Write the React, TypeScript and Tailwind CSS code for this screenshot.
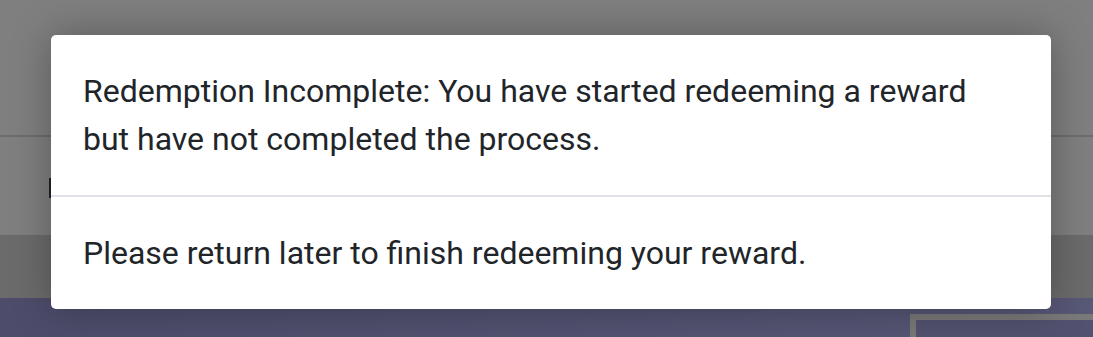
import React from "react";

export default function App() {
  return (
    <div className="relative w-[1093px] h-[337px] overflow-hidden" style={{ fontFamily: "Roboto, 'Liberation Sans', sans-serif" }}>
      {/* underlying page */}
      <div className="flex flex-col h-full">
        <div className="h-[137px] bg-white border-b-2 border-[#d8d8d8]" />
        <div className="h-[98px] bg-white flex items-start pt-[41px] pl-[49px]">
          <div className="w-[3px] h-[20px] bg-[#444]" />
        </div>
        <div className="h-[63px] bg-[#d6d6d6]" />
        <div className="flex-1 bg-gradient-to-r from-[#9a9ad6] to-[#b0b0ee] pt-[16px] pl-[910px]">
          <div className="h-full border-t-[6px] border-l-[6px] border-[#f2f2f2] bg-[#a4a4e0]" />
        </div>
      </div>

      {/* backdrop */}
      <div className="absolute inset-0 bg-black/50" />

      {/* modal */}
      <div className="absolute left-[51px] top-[35px] w-[1000px] bg-white rounded-[5px] shadow-[0_0_40px_rgba(0,0,0,0.3)] text-[#212529]">
        <div className="px-[32px] py-[32px] border-b-2 border-[#dee2e6]">
          <p className="text-[32px] leading-[48px] font-normal">
            Redemption Incomplete: You have started redeeming a reward
            <br />
            but have not completed the process.
          </p>
        </div>
        <div className="px-[32px] py-[32px]">
          <p className="text-[32px] leading-[48px]">Please return later to finish redeeming your reward.</p>
        </div>
      </div>
    </div>
  );
}
